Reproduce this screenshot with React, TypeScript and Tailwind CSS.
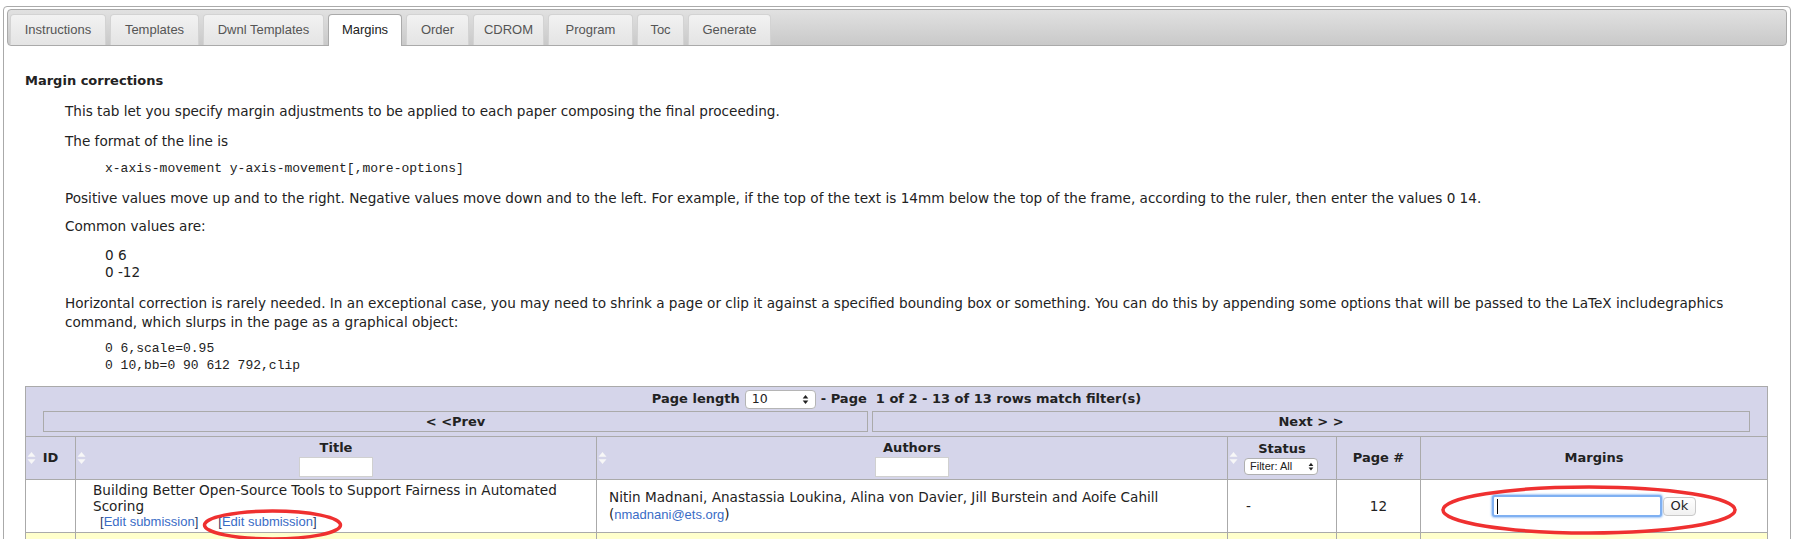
import React from "react";

const tabs: { label: string; w: string; active?: boolean }[] = [
  { label: "Instructions", w: "w-[96px]" },
  { label: "Templates", w: "w-[89px]" },
  { label: "Dwnl Templates", w: "w-[121px]" },
  { label: "Margins", w: "w-[74px]", active: true },
  { label: "Order", w: "w-[63px]" },
  { label: "CDROM", w: "w-[71px]" },
  { label: "Program", w: "w-[85px]" },
  { label: "Toc", w: "w-[47px]" },
  { label: "Generate", w: "w-[83px]" },
];

function SortIcon() {
  return (
    <svg
      width="9"
      height="14"
      viewBox="0 0 9 14"
      className="absolute left-[1px] top-1/2 -translate-y-1/2"
    >
      <path d="M4.5 1 L8.5 5.8 H0.5 Z" fill="#f7f7f7" />
      <path d="M4.5 13 L8.5 8.2 H0.5 Z" fill="#f7f7f7" />
    </svg>
  );
}

function UpDown({ s = 1 }: { s?: number }) {
  return (
    <svg width={7 * s} height={11 * s} viewBox="0 0 7 11">
      <path d="M3.5 1 L6.3 4.6 H0.7 Z" fill="#222" />
      <path d="M3.5 10 L6.3 6.4 H0.7 Z" fill="#222" />
    </svg>
  );
}

function EditLink() {
  return (
    <span className="font-['Liberation_Sans',Arial,sans-serif] text-[13px]">
      <span className="text-[#2b3a67]">[</span>
      <span className="text-[#3a6cc6]">Edit submission</span>
      <span className="text-[#2b3a67]">]</span>
    </span>
  );
}

export default function App() {
  return (
    <div className="relative min-h-[539px] bg-white text-[#222]">
      <div className="mx-[3px] mt-[6px] rounded-[4px] border border-[#aaaaaa] px-[3px] pt-[2px] pb-[40px]">
        {/* tab bar */}
        <div className="flex h-[37px] items-start gap-[4px] rounded-[4px] border border-[#aaaaaa] bg-gradient-to-b from-[#e1e1e1] to-[#c9c9c9] pl-[2px] pt-[4px]">
          {tabs.map((t) =>
            t.active ? (
              <div
                key={t.label}
                className={`${t.w} relative flex h-[32px] items-center justify-center rounded-t-[4px] border border-b-0 border-[#aaaaaa] bg-white pb-[1px] font-['Liberation_Sans',Arial,sans-serif] text-[13px] text-[#212121]`}
              >
                {t.label}
              </div>
            ) : (
              <div
                key={t.label}
                className={`${t.w} flex h-[31px] items-center justify-center rounded-t-[4px] border border-b-0 border-[#d3d3d3] bg-gradient-to-b from-[#f2f2f2] to-[#e4e4e4] font-['Liberation_Sans',Arial,sans-serif] text-[13px] text-[#555555]`}
              >
                {t.label}
              </div>
            )
          )}
        </div>

        {/* panel */}
        <div className="pl-[18px] pt-[27px]">
          <h3 className="font-['DejaVu_Sans',Verdana,sans-serif] text-[13px] font-bold leading-[16px]">
            Margin corrections
          </h3>
          <div className="ml-[40px] font-['DejaVu_Sans',Verdana,sans-serif] text-[13.6px] leading-[18px]">
            <p className="mt-[13px]">
              This tab let you specify margin adjustments to be applied to each paper composing the final proceeding.
            </p>
            <p className="mt-[12px]">The format of the line is</p>
            <p className="ml-[40px] mt-[10px] font-['Liberation_Mono',monospace] text-[13px]">
              x-axis-movement y-axis-movement[,more-options]
            </p>
            <p className="mt-[11px]">
              Positive values move up and to the right. Negative values move down and to the left. For example, if the top of the text is 14mm below the top of the frame, according to the ruler, then enter the values 0 14.
            </p>
            <p className="mt-[10px]">Common values are:</p>
            <div className="ml-[40px] mt-[12px] leading-[17px]">
              <div>0 6</div>
              <div>0 -12</div>
            </div>
            <p className="mt-[13px] leading-[19px]">
              Horizontal correction is rarely needed. In an exceptional case, you may need to shrink a page or clip it against a specified bounding box or something. You can do this by appending some options that will be passed to the LaTeX includegraphics
              <br />
              command, which slurps in the page as a graphical object:
            </p>
            <div className="ml-[40px] mt-[8px] font-['Liberation_Mono',monospace] text-[13px] leading-[17px]">
              <div>0 6,scale=0.95</div>
              <div>0 10,bb=0 90 612 792,clip</div>
            </div>
          </div>

          {/* table */}
          <table className="mt-[12px] w-[1742px] table-fixed border-collapse border border-[#aaaaaa] font-['DejaVu_Sans',Verdana,sans-serif] text-[13.6px] text-[#222]">
            <colgroup>
              <col className="w-[50px]" />
              <col className="w-[521px]" />
              <col className="w-[631px]" />
              <col className="w-[109px]" />
              <col className="w-[84px]" />
              <col className="w-[347px]" />
            </colgroup>
            <thead>
              <tr>
                <th
                  colSpan={6}
                  className="border border-[#aaaaaa] bg-[#d5d5ea] px-[17px] pt-[2px] pb-[4px] font-normal"
                >
                  <div className="flex h-[20px] items-center justify-center text-[13px] font-bold">
                    <span>Page length</span>
                    <span className="mx-[5px] inline-flex h-[19px] w-[71px] items-center justify-between rounded-[4px] border border-[#b5b5b5] bg-white pl-[6px] pr-[6px] text-[12.5px] font-normal">
                      <span>10</span>
                      <UpDown />
                    </span>
                    <span className="whitespace-pre">- Page  1 of 2 - 13 of 13 rows match filter(s)</span>
                  </div>
                  <div className="mt-[2px] flex gap-[4px] text-[13px]">
                    <div className="flex h-[21px] w-[825px] items-center justify-center border border-[#aaaaaa] font-bold">
                      &lt; &lt;Prev
                    </div>
                    <div className="flex h-[21px] flex-1 items-center justify-center border border-[#aaaaaa] font-bold">
                      Next &gt; &gt;
                    </div>
                  </div>
                </th>
              </tr>
              <tr className="h-[43px] bg-[#d5d5ea] text-[13px]">
                <th className="relative border border-[#aaaaaa] p-0 align-middle font-bold">
                  <SortIcon />
                  ID
                </th>
                <th className="relative border border-[#aaaaaa] p-0 align-middle font-bold">
                  <SortIcon />
                  <div className="leading-[15px]">Title</div>
                  <div className="mx-auto mt-[2px] h-[20px] w-[74px] border border-[#d0d0d0] bg-white" />
                </th>
                <th className="relative border border-[#aaaaaa] p-0 align-middle font-bold">
                  <SortIcon />
                  <div className="leading-[15px]">Authors</div>
                  <div className="mx-auto mt-[2px] h-[20px] w-[74px] border border-[#d0d0d0] bg-white" />
                </th>
                <th className="relative border border-[#aaaaaa] p-0 align-middle font-bold">
                  <SortIcon />
                  <div className="leading-[15px]">Status</div>
                  <div className="ml-[16px] mt-[2px] flex h-[17px] w-[74px] items-center justify-between rounded-[4px] border border-[#b0b0b0] bg-white pl-[5px] pr-[3px] font-['Liberation_Sans',Arial,sans-serif] text-[11px] font-normal">
                    <span>Filter: All</span>
                    <UpDown s={0.85} />
                  </div>
                </th>
                <th className="border border-[#aaaaaa] p-0 align-middle font-bold">Page #</th>
                <th className="border border-[#aaaaaa] p-0 align-middle font-bold">Margins</th>
              </tr>
            </thead>
            <tbody>
              <tr className="h-[53px] bg-white">
                <td className="border border-[#aaaaaa]" />
                <td className="border border-[#aaaaaa] px-[17px] align-middle leading-[16px]">
                  <div>Building Better Open-Source Tools to Support Fairness in Automated Scoring</div>
                  <div className="flex gap-[20px] pl-[7px]">
                    <EditLink />
                    <EditLink />
                  </div>
                </td>
                <td className="border border-[#aaaaaa] px-[12px] align-middle leading-[17px]">
                  <div>Nitin Madnani, Anastassia Loukina, Alina von Davier, Jill Burstein and Aoife Cahill</div>
                  <div>
                    (
                    <span className="font-['Liberation_Sans',Arial,sans-serif] text-[13px] text-[#3a6cc6]">
                      nmadnani@ets.org
                    </span>
                    )
                  </div>
                </td>
                <td className="border border-[#aaaaaa] pl-[18px] align-middle">-</td>
                <td className="border border-[#aaaaaa] text-center align-middle">12</td>
                <td className="border border-[#aaaaaa] align-middle">
                  <div className="flex items-center justify-center gap-[1px]">
                    <div className="flex h-[22px] w-[170px] items-center rounded-[3px] border-2 border-[#7fb0f2] bg-white pl-[3px] shadow-[0_0_2px_1px_#a9cbf7]">
                      <div className="h-[15px] w-[1px] bg-black" />
                    </div>
                    <div className="flex h-[19px] w-[33px] items-center justify-center rounded-[4px] border border-[#c9c9c9] bg-gradient-to-b from-white to-[#f1f1f1] text-[13px]">
                      Ok
                    </div>
                  </div>
                </td>
              </tr>
              <tr className="h-[53px] bg-[#ffffcc]">
                <td className="border border-[#aaaaaa]" />
                <td className="border border-[#aaaaaa]" />
                <td className="border border-[#aaaaaa]" />
                <td className="border border-[#aaaaaa]" />
                <td className="border border-[#aaaaaa]" />
                <td className="border border-[#aaaaaa]" />
              </tr>
            </tbody>
          </table>
        </div>
      </div>

      {/* red annotation ellipses */}
      <svg className="pointer-events-none absolute left-[202px] top-[503px]" width="141" height="32" viewBox="0 0 141 32">
        <ellipse cx="70.5" cy="16" rx="68" ry="14" fill="none" stroke="#ef3030" strokeWidth="3.5" />
      </svg>
      <svg className="pointer-events-none absolute left-[1441px] top-[479px]" width="296" height="50" viewBox="0 0 296 50">
        <ellipse cx="148" cy="25" rx="146" ry="23" fill="none" stroke="#ef3030" strokeWidth="3.5" />
      </svg>
    </div>
  );
}
